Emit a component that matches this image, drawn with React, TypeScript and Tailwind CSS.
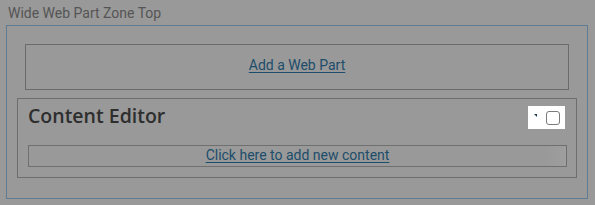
import React from "react";

export default function App() {
  return (
    <div className="w-[595px] h-[205px] bg-[#999999] overflow-hidden" style={{ fontFamily: "Roboto, 'Liberation Sans', sans-serif" }}>
      <div className="pt-[5px] pl-[8px] text-[14px] leading-[16px] text-[#555555]">Wide Web Part Zone Top</div>
      <div className="mt-[4px] ml-[6px] w-[582px] h-[174px] border border-[#5f7c94] px-[10px] pt-[18px]">
        <div className="mx-[8px] h-[46px] border border-[#6b6b6b] flex justify-center pt-[12px]">
          <a className="text-[14px] leading-[16px] h-[16px] text-[#1c4d6a] underline underline-offset-[2px] cursor-pointer">Add a Web Part</a>
        </div>
        <div className="mt-[8px] h-[80px] border border-[#6e6e6e] pl-[10px] pr-[9px]">
          <div className="flex justify-between items-start h-[46px]">
            <div
              className="mt-[5px] text-[19.5px] leading-[24px] font-semibold text-[#2e2e2e]"
              style={{ fontFamily: "'Open Sans', 'Noto Sans', sans-serif" }}
            >
              Content Editor
            </div>
            <div className="mt-[7px] mr-[2px] w-[37px] h-[23px] bg-white flex items-center">
              <svg width="4" height="4" viewBox="0 0 4 4" className="ml-[6px] mb-[3px]">
                <polygon points="0,0 3,0 3,3" fill="#1c3d52" />
              </svg>
              <div className="ml-[8px] w-[14px] h-[14px] rounded-[3px] border border-[#7a7a7a] bg-white" />
            </div>
          </div>
          <div className="h-[22px] border border-[#6f6f6f] flex justify-center pt-[1px] bg-gradient-to-r from-transparent from-[96%] to-[#9e9e9e]">
            <a className="text-[14px] leading-[16px] h-[16px] text-[#1c4d6a] underline underline-offset-[2px] cursor-pointer">Click here to add new content</a>
          </div>
        </div>
      </div>
    </div>
  );
}
